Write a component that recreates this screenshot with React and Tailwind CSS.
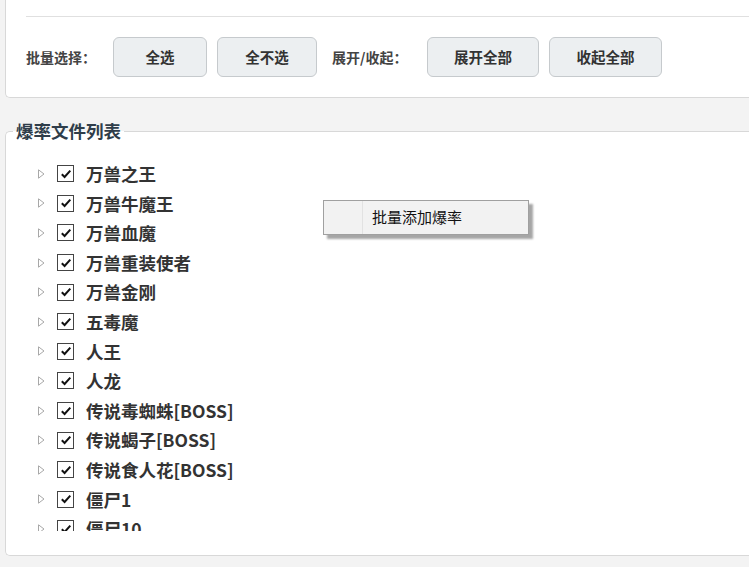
import React from "react";

const items = [
  "万兽之王",
  "万兽牛魔王",
  "万兽血魔",
  "万兽重装使者",
  "万兽金刚",
  "五毒魔",
  "人王",
  "人龙",
  "传说毒蜘蛛[BOSS]",
  "传说蝎子[BOSS]",
  "传说食人花[BOSS]",
  "僵尸1",
  "僵尸10",
  "僵尸11",
];

const font = { fontFamily: '"Noto Sans CJK SC", "Noto Sans", sans-serif' };

function Btn({ w, children }) {
  return (
    <button
      className={`h-[40px] ${w} rounded-[6px] border border-[#c6cacd] bg-[#eceff1] text-[14.5px] font-bold text-[#333]`}
    >
      {children}
    </button>
  );
}

function TreeRow({ label }) {
  return (
    <div className="flex h-[29.6px] items-center">
      <svg width="7" height="10" viewBox="0 0 7 10" className="ml-[32px]">
        <path d="M0.5 0.8 L6 5 L0.5 9.2 Z" fill="none" stroke="#a8a8a8" strokeWidth="1" />
      </svg>
      <span className="ml-[12px] flex h-[17px] w-[17px] items-center justify-center border border-[#444] bg-white">
        <svg width="12" height="12" viewBox="0 0 12 12">
          <path d="M1.8 6.2 L4.6 9 L10.3 2.6" fill="none" stroke="#111" strokeWidth="2" />
        </svg>
      </span>
      <span className="ml-[12px] text-[17.5px] font-bold leading-none text-[#333]">{label}</span>
    </div>
  );
}

export default function App() {
  return (
    <div className="relative h-[567px] w-[749px] overflow-hidden bg-[#f3f3f3]" style={font}>
      <div className="ml-[5px] h-[98px] rounded-bl-[5px] border-b border-l border-[#d8d8d8] bg-white pl-[20px]">
        <div className="h-[17px] border-b border-[#e0e0e0]" />
        <div className="mt-[20px] flex h-[40px] items-center">
          <span className="w-[87px] text-[14px] font-bold text-[#444]">批量选择：</span>
          <div className="flex gap-[10px]">
            <Btn w="w-[94px]">全选</Btn>
            <Btn w="w-[100px]">全不选</Btn>
          </div>
          <span className="ml-[15px] w-[95px] text-[14px] font-bold text-[#444]">展开/收起：</span>
          <div className="flex gap-[10px]">
            <Btn w="w-[112px]">展开全部</Btn>
            <Btn w="w-[113px]">收起全部</Btn>
          </div>
        </div>
      </div>

      <fieldset className="m-0 ml-[5px] mt-[21px] h-[437px] rounded-l-[5px] border-b border-l border-t border-[#d8d8d8] bg-white p-0">
        <legend className="ml-[7px] px-[3px] text-[17.5px] font-bold leading-[24px] text-[#2f3d4a]">
          爆率文件列表
        </legend>
        <div className="mt-[16px] h-[372px] overflow-hidden">
          {items.map((t) => (
            <TreeRow key={t} label={t} />
          ))}
        </div>
      </fieldset>

      <div className="absolute left-[323px] top-[200px] flex h-[35px] w-[206px] border border-[#a0a0a0] bg-[#f2f2f2] shadow-[4px_4px_2px_rgba(0,0,0,0.35)]">
        <div className="w-[39px] border-r border-[#e2e2e2]" />
        <div className="flex items-center pl-[9px] text-[15px] text-[#111]">批量添加爆率</div>
      </div>
    </div>
  );
}
